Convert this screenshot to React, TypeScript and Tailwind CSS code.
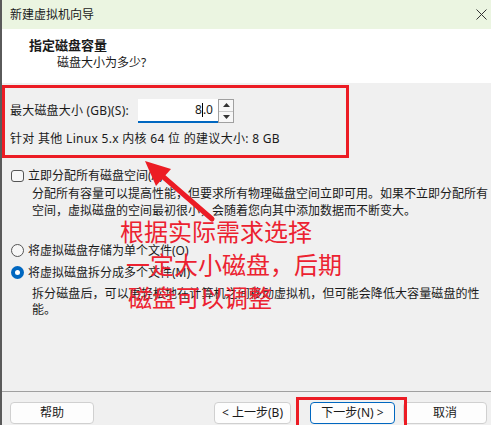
import React from "react";

const font = { fontFamily: '"Noto Sans", "Noto Sans CJK SC", sans-serif' };

const Spinner = () => (
    <div className="flex flex-col w-[16px] h-[24px] border border-[#a0a0a0] bg-[#f7f7f7]">
        <div className="flex-1 flex items-center justify-center border-b border-[#c8c8c8]">
            <svg width="7" height="4" viewBox="0 0 7 4"><path d="M0 4 L3.5 0 L7 4 Z" fill="#333" /></svg>
        </div>
        <div className="flex-1 flex items-center justify-center">
            <svg width="7" height="4" viewBox="0 0 7 4"><path d="M0 0 L3.5 4 L7 0 Z" fill="#333" /></svg>
        </div>
    </div>
);

const Btn = ({ label, className }: { label: string; className: string }) => (
    <div
        className={`h-[22px] flex items-center justify-center rounded-[4px] border bg-[#fdfdfd] text-[12px] text-[#1a1a1a] ${className}`}
    >
        {label}
    </div>
);

const App = () => {
    return (
        <div
            className="relative w-[491px] h-[425px] overflow-hidden bg-[#f0f0f0] border-l-2 border-[#5a5a5a] flex flex-col text-[#1a1a1a]"
            style={font}
        >
            {/* title bar */}
            <div className="h-[29px] shrink-0 bg-[#ebf5e1] flex items-center pl-[8px] pr-[4px]">
                <span className="text-[12px]">新建虚拟机向导</span>
                <svg className="ml-auto" width="11" height="11" viewBox="0 0 11 11">
                    <path d="M0.5 0.5 L10.5 10.5 M10.5 0.5 L0.5 10.5" stroke="#333" strokeWidth="1" />
                </svg>
            </div>

            {/* header */}
            <div className="h-[54px] shrink-0 bg-white pl-[27px] pt-[6px]">
                <div className="text-[13px] font-bold leading-[20px]">指定磁盘容量</div>
                <div className="text-[12px] leading-[16px] pl-[28px]">磁盘大小为多少?</div>
            </div>

            {/* body */}
            <div className="flex-1 flex flex-col pl-[8px]">
                <div className="flex items-center mt-[16px] h-[24px]">
                    <span className="text-[12px] w-[128px] tracking-[0.2px]">最大磁盘大小 (GB)(S):</span>
                    <div className="w-[80px] h-[24px] bg-white border-b-2 border-[#0067c0] flex items-center justify-end pr-[5px] text-[12px]">
                        <span>8</span>
                        <span className="w-px h-[14px] bg-black"></span>
                        <span>.0</span>
                    </div>
                    <Spinner />
                </div>
                <div className="text-[12px] leading-[17px] mt-[7px] tracking-[0.3px]">针对 其他 Linux 5.x 内核 64 位 的建议大小: 8 GB</div>

                <div className="flex items-center h-[17px] mt-[20px]">
                    <span className="w-[13px] h-[12px] ml-[1px] rounded-[3px] border border-[#555] bg-[#f7f7f7]"></span>
                    <span className="text-[12px] ml-[4px]">立即分配所有磁盘空间(A)。</span>
                </div>
                <div className="text-[12px] leading-[16.5px] pl-[22px] mt-[2px] whitespace-nowrap">
                    分配所有容量可以提高性能，但要求所有物理磁盘空间立即可用。如果不立即分配所有<br />
                    空间，虚拟磁盘的空间最初很小，会随着您向其中添加数据而不断变大。
                </div>

                <div className="flex items-center h-[17px] mt-[23px]">
                    <span className="w-[13px] h-[13px] ml-[1px] rounded-full border border-[#555] bg-[#f7f7f7]"></span>
                    <span className="text-[12px] ml-[4px]">将虚拟磁盘存储为单个文件(O)</span>
                </div>
                <div className="flex items-center h-[17px] mt-[5px]">
                    <span className="w-[13px] h-[13px] ml-[1px] rounded-full bg-[#0067c0] flex items-center justify-center">
                        <span className="w-[5px] h-[5px] rounded-full bg-white"></span>
                    </span>
                    <span className="text-[12px] ml-[4px]">将虚拟磁盘拆分成多个文件(M)</span>
                </div>
                <div className="text-[12px] leading-[16px] pl-[22px] mt-[5px] tracking-[0.1px] whitespace-nowrap">
                    拆分磁盘后，可以更轻松地在计算机之间移动虚拟机，但可能会降低大容量磁盘的性<br />
                    能。
                </div>

                <div className="mt-auto border-t border-[#a0a0a0] -ml-[8px] h-[34px] flex items-start pt-[10px] pl-[8px]">
                    <Btn label="帮助" className="w-[84px] border-[#d0d0d0]" />
                    <Btn label="< 上一步(B)" className="w-[77px] ml-[120px] border-[#d0d0d0]" />
                    <Btn label="下一步(N) >" className="w-[85px] ml-[19px] border-[#0067c0]" />
                    <Btn label="取消" className="w-[84px] ml-[8px] border-[#d0d0d0]" />
                </div>
            </div>

            {/* annotations */}
            <div className="absolute left-[0px] top-[85px] w-[347px] h-[73px] border-[3px] border-[#ec1c24]"></div>
            <div className="absolute left-[294px] top-[397px] w-[111px] h-[40px] border-[3px] border-[#ec1c24]"></div>
            <svg className="absolute left-0 top-0 pointer-events-none" width="491" height="425" viewBox="0 0 491 425">
                <line x1="210" y1="219" x2="158" y2="174" stroke="#ec1c24" strokeWidth="5" strokeLinecap="round" />
                <polygon points="143,161 169,169 154,186" fill="#ec1c24" />
            </svg>
            <div
                className="absolute left-[118px] top-[214px] text-[24px] leading-[33px] text-[#ec2230] pointer-events-none"
                style={{ fontFamily: '"Noto Sans CJK SC", sans-serif' }}
            >
                <div>根据实际需求选择</div>
                <div className="pl-[6px]">一定大小磁盘，后期</div>
                <div className="pl-[8px]">磁盘可以调整</div>
            </div>
        </div>
    );
};

export default App;
